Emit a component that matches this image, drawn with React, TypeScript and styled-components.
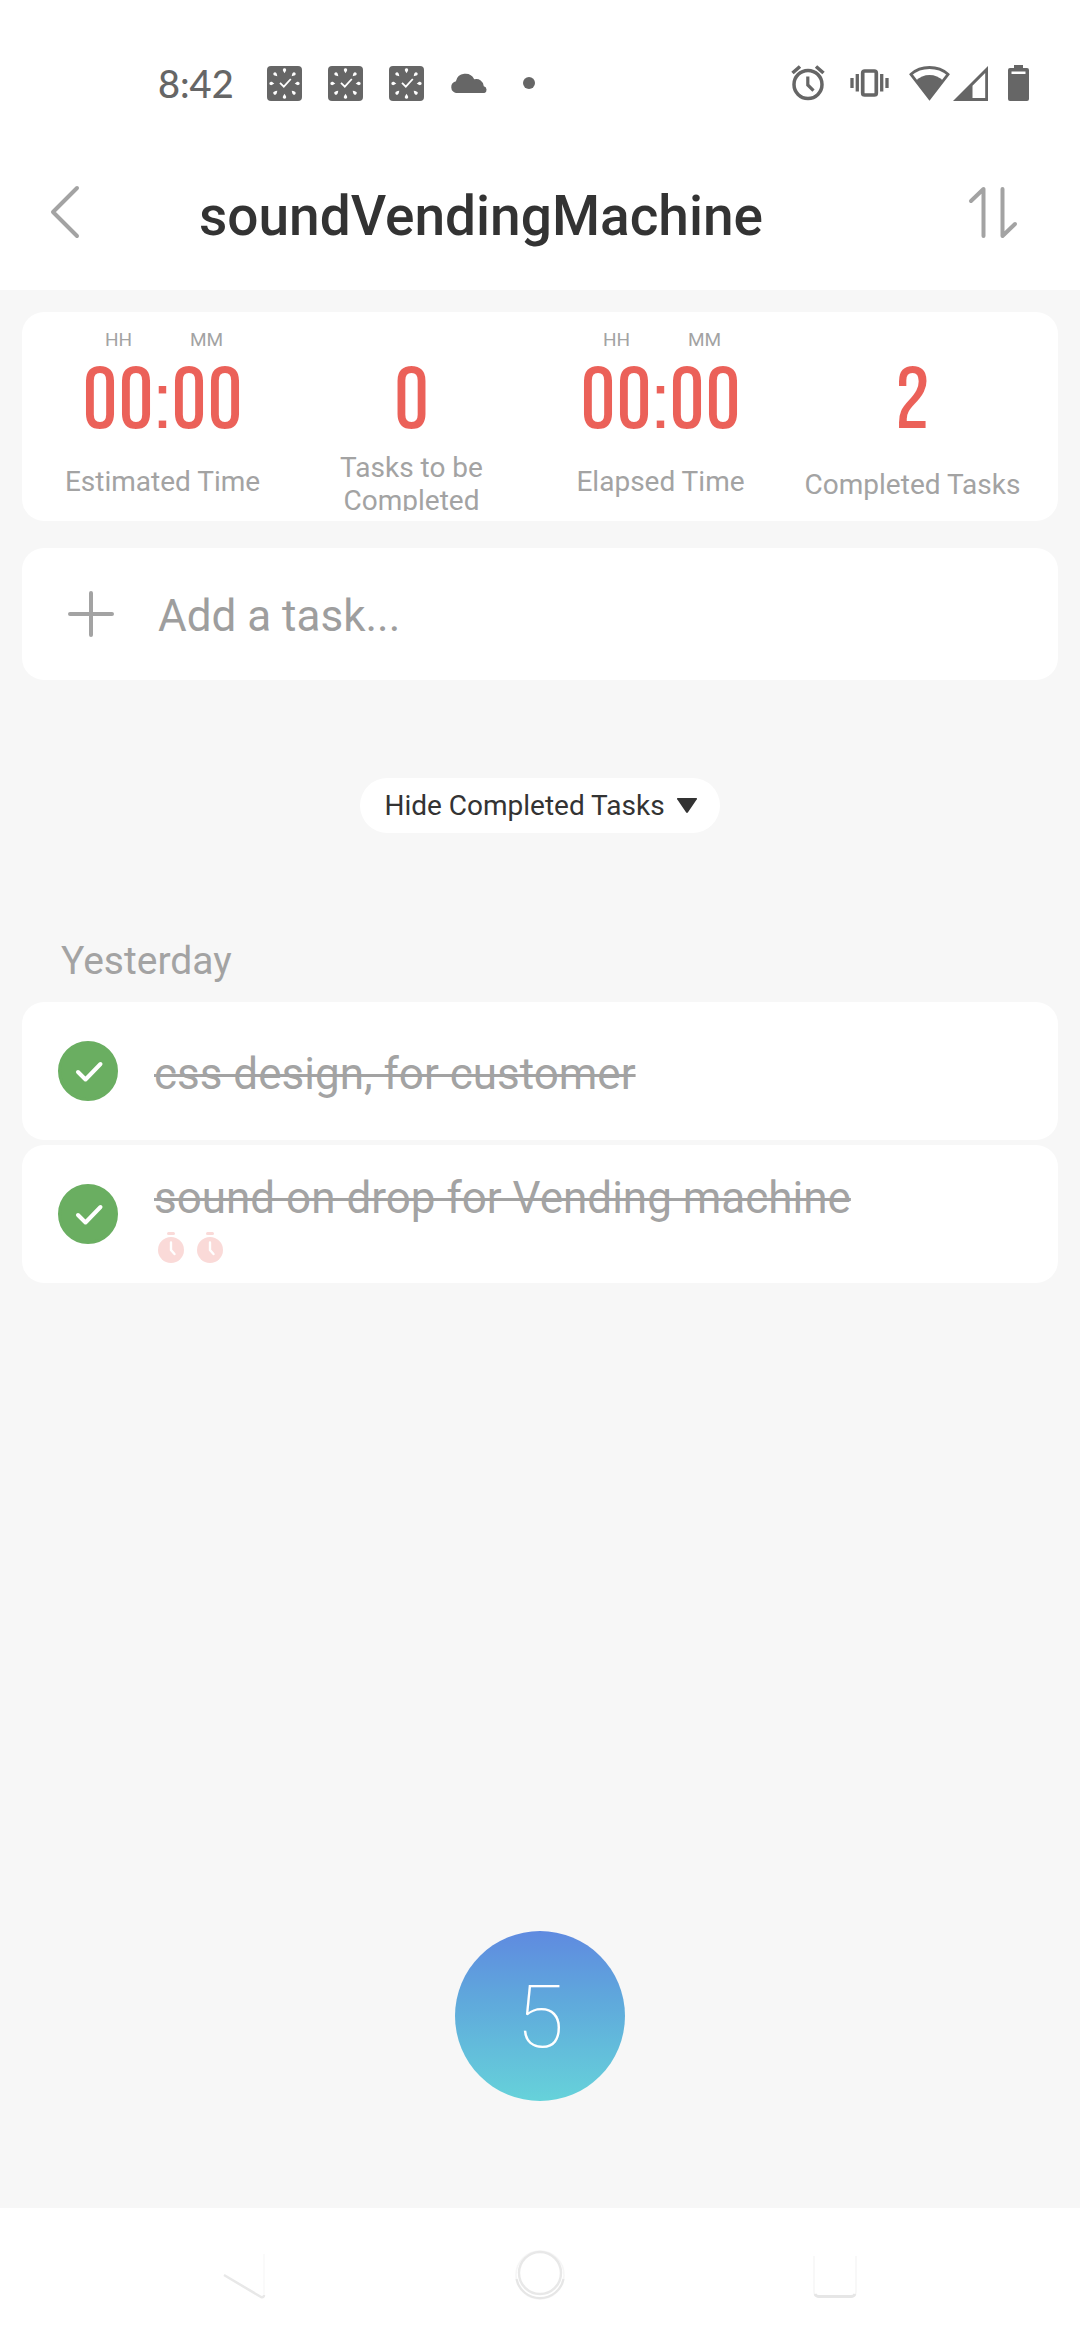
import React, { useState } from "react";
import styled, { createGlobalStyle } from "styled-components";

const GlobalStyle = createGlobalStyle`
  * { box-sizing: border-box; }
  body { margin: 0; background: #f7f7f7; font-family: Roboto, "Noto Sans", sans-serif; }
  button, input { font-family: inherit; }
`;

const Page = styled.div`
  min-height: 100vh;
  display: flex;
  flex-direction: column;
  background: #f7f7f7;
`;

const StatusBar = styled.div`
  height: 134px;
  padding: 32px 51px 0 158px;
  display: flex;
  justify-content: space-between;
  align-items: center;
  background: #fff;
  color: #666;
`;

const StatusGroup = styled.div<{ $gap: number }>`
  display: flex;
  align-items: center;
  gap: ${(p) => p.$gap}px;
  svg { display: block; }
`;

const Clock = styled.time`
  font-family: Lato, sans-serif;
  font-size: 38px;
  font-weight: 500;
  line-height: 40px;
  margin-right: 7px;
`;

const Header = styled.header`
  height: 156px;
  padding: 0 59px 0 50px;
  display: flex;
  align-items: center;
  background: #fff;
`;

const IconButton = styled.button`
  border: 0;
  padding: 0;
  background: none;
  color: #a3a3a3;
  cursor: pointer;
  svg { display: block; }
`;

const Title = styled.h1`
  flex: 1;
  margin: 0;
  padding: 8px 0 0 117px;
  font-size: 55px;
  line-height: 64px;
  font-weight: 500;
  color: #333;
`;

const Main = styled.main`
  flex: 1;
  display: flex;
  flex-direction: column;
  padding: 22px 22px 107px;
`;

const Card = styled.section`
  background: #fff;
  border-radius: 22px;
`;

const Stats = styled(Card)`
  display: grid;
  grid-template-columns: 249fr 249fr 249fr 255fr;
  padding: 16px 18px 10px 16px;
`;

const Stat = styled.div`
  display: flex;
  flex-direction: column;
  align-items: center;
`;

const Units = styled.div`
  height: 22px;
  display: grid;
  grid-template-columns: 88px 88px;
  text-align: center;
  font-size: 19px;
  line-height: 24px;
  color: #a3a3a3;
`;

/* The white outline trims the heavy display face down to a lighter stroke. */
const Value = styled.div`
  height: 95px;
  font-family: "Bebas Neue", "Roboto Condensed", Roboto, sans-serif;
  font-size: 90px;
  line-height: 104px;
  color: #eb6159;
  -webkit-text-stroke: 2px #fff;
`;

const StatLabel = styled.div<{ $align: string; $inset: number }>`
  height: 60px;
  margin-top: 6px;
  padding-top: ${(p) => p.$inset}px;
  overflow: hidden;
  display: flex;
  align-items: ${(p) => p.$align};
  text-align: center;
  font-size: 28px;
  line-height: 33px;
  color: #a3a3a3;
  span { max-width: 220px; }
`;

const AddRow = styled(Card)`
  height: 132px;
  margin-top: 27px;
  padding: 0 44px;
  display: flex;
  align-items: center;
  gap: 42px;
`;

const AddInput = styled.input`
  flex: 1;
  min-width: 0;
  border: 0;
  outline: 0;
  padding: 4px 0 0;
  background: none;
  font-size: 44px;
  line-height: 52px;
  color: #333;
  &::placeholder { color: #9e9e9e; opacity: 1; }
`;

const TogglePill = styled.button`
  align-self: center;
  height: 55px;
  margin-top: 98px;
  padding: 0 23px 0 24px;
  border: 0;
  border-radius: 28px;
  background: #fff;
  display: flex;
  align-items: center;
  gap: 12px;
  font-size: 28px;
  line-height: 33px;
  color: #333;
  cursor: pointer;
`;

const GroupTitle = styled.h2`
  margin: 105px 0 17px 39px;
  font-size: 39px;
  line-height: 47px;
  font-weight: 400;
  color: #a3a3a3;
`;

const TaskList = styled.ul`
  margin: 0;
  padding: 0;
  list-style: none;
  display: flex;
  flex-direction: column;
  gap: 5px;
`;

const Task = styled.li`
  height: 138px;
  padding: 0 36px;
  border-radius: 22px;
  background: #fff;
  display: flex;
  align-items: center;
  gap: 36px;
`;

const CheckHolder = styled.span`
  display: grid;
  > * { grid-area: 1 / 1; }
  svg { pointer-events: none; }
`;

const CheckInput = styled.input`
  appearance: none;
  width: 60px;
  height: 60px;
  margin: 0;
  border-radius: 50%;
  border: 3px solid #6aae61;
  &:checked { background: #6aae61; }
`;

const TaskBody = styled.div`
  display: flex;
  flex-direction: column;
  gap: 8px;
  padding-top: 6px;
`;

const TaskName = styled.label`
  font-size: 44px;
  line-height: 52px;
  color: #a3a3a3;
  text-decoration: line-through;
  text-decoration-thickness: 3px;
`;

const Pomodoros = styled.div`
  display: flex;
  gap: 13px;
  padding-left: 4px;
`;

const CountButton = styled.button`
  align-self: center;
  width: 170px;
  height: 170px;
  margin-top: auto;
  border: 0;
  padding: 2px 0 0;
  border-radius: 50%;
  background: linear-gradient(#5f8ae0, #5fa8dc 40%, #66d2da);
  color: #fff;
  font-size: 88px;
  line-height: 104px;
  font-weight: 100;
  cursor: pointer;
`;

const NavBar = styled.nav`
  height: 132px;
  padding: 0 222px;
  background: #fff;
  display: flex;
  justify-content: space-between;
  align-items: center;
`;

const ClockTile = () => (
  <svg width="35" height="35" viewBox="0 0 35 35">
    <rect width="35" height="35" rx="4" fill="currentColor" />
    {[0, 45, 90, 135, 180, 225, 270, 315].map((a) => (
      <path key={a} d="M17.500 7.300C16 5 15.700 4.500 15.900 3.600a1.650 1.650 0 0 1 3.200 0C19.300 4.500 19 5 17.500 7.300Z" fill="#fff" transform={`rotate(${a} 17.500 17.500)`} />
    ))}
    <path d="M13 16.800l3.800 3.800 7-7.600" fill="none" stroke="#fff" strokeWidth="1.800" />
  </svg>
);

const Tomato = () => (
  <svg width="26" height="31" viewBox="0 0 26 31" fill="#fadad8">
    <rect x="9" y="0" width="8" height="3" rx="1.500" />
    <circle cx="13" cy="18" r="13" />
    <path d="M13 10.500v7.500l3.500 4" fill="none" stroke="#fff" strokeWidth="2.400" strokeLinecap="round" />
  </svg>
);

const stats = [
  { value: "00:00", label: "Estimated Time", units: true, align: "center", inset: 0 },
  { value: "0", label: "Tasks to be Completed", units: false, align: "flex-start", inset: 0 },
  { value: "00:00", label: "Elapsed Time", units: true, align: "center", inset: 0 },
  { value: "2", label: "Completed Tasks", units: false, align: "center", inset: 6 },
];

const tasks = [
  { id: "t1", name: "css design, for customer", pomodoros: 0 },
  { id: "t2", name: "sound on drop for Vending machine", pomodoros: 2 },
];

export default function App() {
  const [open, setOpen] = useState(true);
  return (
    <Page>
      <GlobalStyle />
      <StatusBar>
        <StatusGroup $gap={26}>
          <Clock>8:42</Clock>
          <ClockTile />
          <ClockTile />
          <ClockTile />
          <svg width="38" height="20" viewBox="0 0 38 20" fill="currentColor">
            <path d="M6 20a6 6 0 0 1-.8-11.500h.6a9.800 9.800 0 0 1 18.400-2.200 7.500 7.500 0 0 1 9.600 6.900A3.600 3.600 0 0 1 34.400 20Z" />
          </svg>
          <svg width="30" height="12" viewBox="0 0 30 12" fill="currentColor">
            <circle cx="15" cy="6" r="6" />
          </svg>
        </StatusGroup>
        <StatusGroup $gap={20}>
          <svg width="39" height="36" viewBox="0 0 39 36" fill="none" stroke="currentColor">
            <circle cx="17" cy="19.500" r="14" strokeWidth="3.500" />
            <path d="M16.800 11.500v8.500l5.700 5.700" strokeWidth="3.200" />
            <path d="M1.500 8l7.500-6.500M32.500 8L25 1.500" strokeWidth="3.600" />
          </svg>
          <svg width="39" height="28" viewBox="0 0 39 28" fill="none" stroke="currentColor">
            <rect x="12.700" y="2" width="13.600" height="24" rx="2" strokeWidth="3.700" />
            <path d="M2 9v10M37 9v10" strokeWidth="3.300" />
            <path d="M7.300 5v17.500M31.700 5v17.500" strokeWidth="3.300" />
          </svg>
          <StatusGroup $gap={3}>
            <svg width="41" height="35" viewBox="0 0 41 35">
              <path d="M20.500 1.500C13 1.500 6.500 4.200 2 8.300L20.500 32.500 39 8.300C34.500 4.200 28 1.500 20.500 1.500Z" fill="none" stroke="currentColor" strokeWidth="2.800" />
              <path d="M7 14.500C10.500 11 15.500 9 20.500 9s10 2 13.500 5.500L20.500 33Z" fill="currentColor" />
            </svg>
            <svg width="35" height="35" viewBox="0 0 35 35" fill="currentColor" fillRule="evenodd">
              <path d="M35 0v35H0ZM32.200 7L19.500 19.700V32H32.200Z" />
            </svg>
          </StatusGroup>
          <svg width="21" height="36" viewBox="0 0 21 36" fill="currentColor" fillRule="evenodd">
            <path d="M6 0h9v3h4a2 2 0 0 1 2 2v29a2 2 0 0 1-2 2H2a2 2 0 0 1-2-2V5a2 2 0 0 1 2-2h4ZM3.500 6.500V9h14V6.500Z" />
          </svg>
        </StatusGroup>
      </StatusBar>

      <Header>
        <IconButton aria-label="Back">
          <svg width="32" height="56" viewBox="0 0 32 56" fill="none" stroke="currentColor" strokeWidth="4" strokeLinecap="round" strokeLinejoin="round">
            <path d="M27 4L3 28l24 24" />
          </svg>
        </IconButton>
        <Title>soundVendingMachine</Title>
        <IconButton aria-label="Sort">
          <svg width="56" height="56" viewBox="0 0 56 56" fill="none" stroke="currentColor" strokeWidth="4" strokeLinecap="round" strokeLinejoin="round">
            <path d="M6 17L18.500 5v47M37.500 5v47L50 40" />
          </svg>
        </IconButton>
      </Header>

      <Main>
        <Stats>
          {stats.map((s) => (
            <Stat key={s.label}>
              <Units>
                {s.units && (
                  <>
                    <span>HH</span>
                    <span>MM</span>
                  </>
                )}
              </Units>
              <Value>{s.value}</Value>
              <StatLabel $align={s.align} $inset={s.inset}>
                <span>{s.label}</span>
              </StatLabel>
            </Stat>
          ))}
        </Stats>

        <AddRow>
          <IconButton aria-label="Add">
            <svg width="50" height="50" viewBox="0 0 50 50" fill="none" stroke="currentColor" strokeWidth="4" strokeLinecap="round">
              <path d="M4 25h42M25 4v42" />
            </svg>
          </IconButton>
          <AddInput aria-label="Add a task" placeholder="Add a task..." />
        </AddRow>

        <TogglePill aria-expanded={open} onClick={() => setOpen(!open)}>
          Hide Completed Tasks
          <svg width="20" height="16" viewBox="0 0 20 16" fill="currentColor">
            <path d="M1.500 0h17a1 1 0 0 1 1 1.800L11 14.300a1.300 1.300 0 0 1-2 0L.5 1.800A1 1 0 0 1 1.500 0Z" />
          </svg>
        </TogglePill>

        {open && (
          <>
            <GroupTitle>Yesterday</GroupTitle>
            <TaskList>
              {tasks.map((t) => (
                <Task key={t.id}>
                  <CheckHolder>
                    <CheckInput type="checkbox" id={t.id} defaultChecked />
                    <svg width="60" height="60" viewBox="0 0 60 60" fill="none" stroke="#fff" strokeWidth="4" strokeLinecap="round" strokeLinejoin="round">
                      <path d="M20 31l7.500 7.500 15-15.500" />
                    </svg>
                  </CheckHolder>
                  <TaskBody>
                    <TaskName htmlFor={t.id}>{t.name}</TaskName>
                    {t.pomodoros > 0 && (
                      <Pomodoros>
                        {Array.from({ length: t.pomodoros }, (_, i) => (
                          <Tomato key={i} />
                        ))}
                      </Pomodoros>
                    )}
                  </TaskBody>
                </Task>
              ))}
            </TaskList>
          </>
        )}

        <CountButton>5</CountButton>
      </Main>

      <NavBar>
        <IconButton aria-label="Navigate back">
          <svg width="46" height="56" viewBox="0 0 46 56" fill="none" strokeLinejoin="round">
            <path d="M42 8v42" stroke="#f5f5f5" strokeWidth="1" />
            <path d="M2 29l37 22q3 1 3-2" stroke="#e8e8e8" strokeWidth="2.500" />
          </svg>
        </IconButton>
        <IconButton aria-label="Home">
          <svg width="56" height="60" viewBox="0 0 56 60" fill="none">
            <circle cx="28" cy="31" r="24" stroke="#f6f6f6" strokeWidth="1.500" />
            <path d="M4.500 35a24 24 0 0 0 47 0" stroke="#e6e6e6" strokeWidth="2.200" />
            <circle cx="28" cy="29" r="21" stroke="#e8e8e8" strokeWidth="2.400" />
          </svg>
        </IconButton>
        <IconButton aria-label="Recent apps">
          <svg width="46" height="56" viewBox="0 0 46 56" fill="none">
            <path d="M2 10v36q0 4 4 4M44 10v36q0 4-4 4" stroke="#f3f3f3" strokeWidth="1.200" />
            <path d="M3 48q1 2.500 4 2.500h32q3 0 4-2.500" stroke="#e6e6e6" strokeWidth="2.800" />
          </svg>
        </IconButton>
      </NavBar>
    </Page>
  );
}
